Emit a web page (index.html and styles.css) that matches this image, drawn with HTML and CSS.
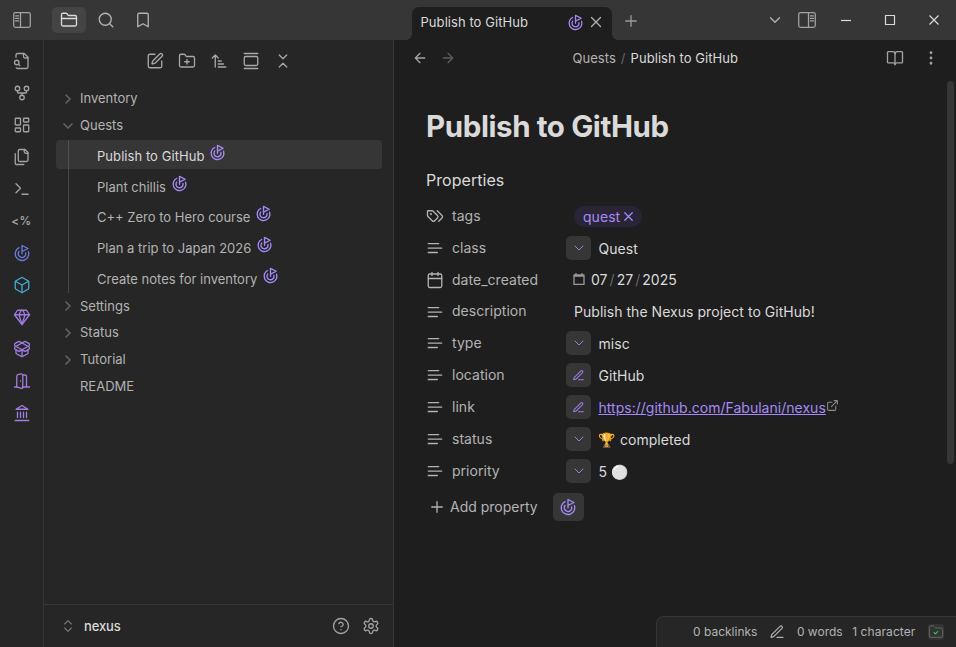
FILE: index.html
```html
<!DOCTYPE html>
<html lang="en">
<head>
<meta charset="utf-8">
<title>Publish to GitHub</title>
<link rel="stylesheet" href="styles.css">
</head>
<body>
<svg class="sprite" aria-hidden="true">
  <symbol id="goal" viewBox="0 0 24 24"><path d="M12 13V2l8 4-8 4"/><path d="M20.561 10.222a9 9 0 1 1-12.55-5.29"/><path d="M8.002 9.997a5 5 0 1 0 8.9 2.02"/></symbol>
  <symbol id="folder" viewBox="0 0 24 24"><path d="M20 20a2 2 0 0 0 2-2V8a2 2 0 0 0-2-2h-7.9a2 2 0 0 1-1.69-.9L9.6 3.9A2 2 0 0 0 7.93 3H4a2 2 0 0 0-2 2v13a2 2 0 0 0 2 2Z"/><path d="M2 10h20"/></symbol>
  <symbol id="folder-plus" viewBox="0 0 24 24"><path d="M12 10v6M9 13h6M20 20a2 2 0 0 0 2-2V8a2 2 0 0 0-2-2h-7.9a2 2 0 0 1-1.69-.9L9.6 3.9A2 2 0 0 0 7.93 3H4a2 2 0 0 0-2 2v13a2 2 0 0 0 2 2Z"/></symbol>
  <symbol id="folder-check" viewBox="0 0 24 24"><path d="M20 20a2 2 0 0 0 2-2V8a2 2 0 0 0-2-2h-7.9a2 2 0 0 1-1.69-.9L9.6 3.9A2 2 0 0 0 7.93 3H4a2 2 0 0 0-2 2v13a2 2 0 0 0 2 2Z"/><path stroke="#2fbf5b" stroke-width="2" d="m9.300 13 1.800 1.800 3.400-3.400"/></symbol>
  <symbol id="search" viewBox="0 0 24 24"><circle cx="11" cy="11" r="8"/><path d="m21 21-4.3-4.3"/></symbol>
  <symbol id="bookmark" viewBox="0 0 24 24"><path d="m19 21-7-4-7 4V5a2 2 0 0 1 2-2h10a2 2 0 0 1 2 2v16z"/></symbol>
  <symbol id="panel" viewBox="0 0 18 16"><rect x=".7" y=".7" width="16.6" height="14.6" rx="1.8"/><path d="M7.5 .7v14.6M2.6 3.9h3M2.6 6.4h3M2.6 8.9h3"/></symbol>
  <symbol id="file-search" viewBox="0 0 24 24"><path d="M14 2v4a2 2 0 0 0 2 2h4"/><path d="M4.268 21a2 2 0 0 0 1.727 1H18a2 2 0 0 0 2-2V7l-5-5H6a2 2 0 0 0-2 2v3"/><path d="m9 18-1.500-1.500"/><circle cx="5" cy="14" r="3"/></symbol>
  <symbol id="fork" viewBox="0 0 24 24"><circle cx="12" cy="18" r="3"/><circle cx="6" cy="6" r="3"/><circle cx="18" cy="6" r="3"/><path d="M18 9v2c0 .6-.4 1-1 1H7c-.6 0-1-.4-1-1V9M12 12v3"/></symbol>
  <symbol id="dashboard" viewBox="0 0 24 24"><rect x="3" y="3" width="7" height="9" rx="1"/><rect x="14" y="3" width="7" height="5" rx="1"/><rect x="14" y="12" width="7" height="9" rx="1"/><rect x="3" y="16" width="7" height="5" rx="1"/></symbol>
  <symbol id="files" viewBox="0 0 24 24"><path d="M20 7h-3a2 2 0 0 1-2-2V2"/><path d="M9 18a2 2 0 0 1-2-2V4a2 2 0 0 1 2-2h7l4 4v10a2 2 0 0 1-2 2Z"/><path d="M3 7.600v12.800A1.600 1.600 0 0 0 4.600 22h9.800"/></symbol>
  <symbol id="terminal" viewBox="0 0 24 24"><path d="m4 17 6-6-6-6M12 19h8"/></symbol>
  <symbol id="box" viewBox="0 0 24 24"><path d="M21 8a2 2 0 0 0-1-1.730l-7-4a2 2 0 0 0-2 0l-7 4A2 2 0 0 0 3 8v8a2 2 0 0 0 1 1.730l7 4a2 2 0 0 0 2 0l7-4A2 2 0 0 0 21 16Z"/><path d="m3.300 7 8.700 5 8.700-5M12 22V12"/></symbol>
  <symbol id="gem" viewBox="0 0 24 24"><path d="M6 3h12l4 6-10 13L2 9Z"/><path d="M11 3 8 9l4 13 4-13-3-6M2 9h20"/></symbol>
  <symbol id="package" viewBox="0 0 24 24"><path d="M12 22v-9"/><path d="M15.170 2.210a1.670 1.670 0 0 1 1.630 0L21 4.570a1.930 1.930 0 0 1 0 3.360L8.820 14.790a1.655 1.655 0 0 1-1.640 0L3 12.430a1.930 1.930 0 0 1 0-3.360z"/><path d="M20 13v3.870a2.060 2.060 0 0 1-1.110 1.830l-6 3.080a1.930 1.930 0 0 1-1.780 0l-6-3.080A2.060 2.060 0 0 1 4 16.870V13"/><path d="M21 12.430a1.930 1.930 0 0 0 0-3.360L8.830 2.200a1.640 1.640 0 0 0-1.630 0L3 4.570a1.930 1.930 0 0 0 0 3.360l12.180 6.860a1.636 1.636 0 0 0 1.630 0z"/></symbol>
  <symbol id="door" viewBox="0 0 24 24"><path d="M13 4h3a2 2 0 0 1 2 2v14M2 20h3M13 20h9M10 12v.01"/><path d="M13 4.562v16.157a1 1 0 0 1-1.242.97L5 20V5.562a2 2 0 0 1 1.515-1.940l4-1A2 2 0 0 1 13 4.561Z"/></symbol>
  <symbol id="landmark" viewBox="0 0 24 24"><path d="M3 22h18M6 18v-7M10 18v-7M14 18v-7M18 18v-7M12 2l8 5H4z"/></symbol>
  <symbol id="compose" viewBox="0 0 24 24"><path d="M12 3H5a2 2 0 0 0-2 2v14a2 2 0 0 0 2 2h14a2 2 0 0 0 2-2v-7"/><path d="M18.375 2.625a1 1 0 0 1 3 3l-9.013 9.014a2 2 0 0 1-.853.505l-2.873.84a.5.5 0 0 1-.62-.62l.84-2.873a2 2 0 0 1 .506-.852z"/></symbol>
  <symbol id="sort" viewBox="0 0 24 24"><path d="m3 8 4-4 4 4M7 4v16M11 12h4M11 16h7M11 20h10"/></symbol>
  <symbol id="gallery" viewBox="0 0 24 24"><path d="M3 2h18M3 22h18"/><rect x="3" y="6" width="18" height="12" rx="2"/></symbol>
  <symbol id="collapse" viewBox="0 0 24 24"><path d="m7 20 5-5 5 5M7 4l5 5 5-5"/></symbol>
  <symbol id="updown" viewBox="0 0 24 24"><path d="m7 15 5 5 5-5M7 9l5-5 5 5"/></symbol>
  <symbol id="right" viewBox="0 0 24 24"><path d="m9 18 6-6-6-6"/></symbol>
  <symbol id="down" viewBox="0 0 24 24"><path d="m6 9 6 6 6-6"/></symbol>
  <symbol id="x" viewBox="0 0 24 24"><path d="M18 6 6 18M6 6l12 12"/></symbol>
  <symbol id="plus" viewBox="0 0 24 24"><path d="M5 12h14M12 5v14"/></symbol>
  <symbol id="left-arrow" viewBox="0 0 24 24"><path d="m12 19-7-7 7-7M19 12H5"/></symbol>
  <symbol id="right-arrow" viewBox="0 0 24 24"><path d="M5 12h14M12 5l7 7-7 7"/></symbol>
  <symbol id="book" viewBox="0 0 24 24"><path d="M12 6v15"/><path d="M3 18.500a1 1 0 0 1-1-1V4.500a1 1 0 0 1 1-1h6a3 3 0 0 1 3 3 3 3 0 0 1 3-3h6a1 1 0 0 1 1 1v13a1 1 0 0 1-1 1h-7a2 2 0 0 0-2 2 2 2 0 0 0-2-2z"/></symbol>
  <symbol id="dots" viewBox="0 0 24 24"><circle cx="12" cy="12" r="1"/><circle cx="12" cy="5" r="1"/><circle cx="12" cy="19" r="1"/></symbol>
  <symbol id="tags" viewBox="0 0 24 24"><path d="m15 5 6.300 6.300a2.400 2.400 0 0 1 0 3.400L17 19"/><path d="M9.586 5.586A2 2 0 0 0 8.172 5H3a1 1 0 0 0-1 1v5.172a2 2 0 0 0 .586 1.414L8.290 18.290a2.426 2.426 0 0 0 3.420 0l3.580-3.580a2.426 2.426 0 0 0 0-3.420z"/><circle cx="6.500" cy="9.500" r=".5"/></symbol>
  <symbol id="text" viewBox="0 0 24 24"><path d="M17 6.100H3M21 12.100H3M15.100 18H3"/></symbol>
  <symbol id="calendar" viewBox="0 0 24 24"><path d="M8 2v4M16 2v4M3 10h18"/><rect x="3" y="4" width="18" height="18" rx="2"/></symbol>
  <symbol id="picker" viewBox="0 0 12 12"><path d="M1 2h10v9.500H1zM1 3h10M3 .5v2M9 .5v2"/></symbol>
  <symbol id="pen" viewBox="0 0 24 24"><path d="M12 20h9M16.500 3.500a2.120 2.120 0 0 1 3 3L7 19l-4 1 1-4Z"/></symbol>
  <symbol id="external" viewBox="0 0 24 24"><path d="M15 3h6v6M10 14 21 3M18 13v6a2 2 0 0 1-2 2H5a2 2 0 0 1-2-2V8a2 2 0 0 1 2-2h6"/></symbol>
  <symbol id="help" viewBox="0 0 24 24"><circle cx="12" cy="12" r="10"/><path d="M9.090 9a3 3 0 0 1 5.830 1c0 2-3 3-3 3M12 17h.01"/></symbol>
  <symbol id="gear" viewBox="0 0 24 24"><path d="M12.220 2h-.44a2 2 0 0 0-2 2v.18a2 2 0 0 1-1 1.730l-.43.25a2 2 0 0 1-2 0l-.15-.08a2 2 0 0 0-2.730.73l-.22.38a2 2 0 0 0 .73 2.730l.15.1a2 2 0 0 1 1 1.720v.51a2 2 0 0 1-1 1.740l-.15.09a2 2 0 0 0-.73 2.730l.22.38a2 2 0 0 0 2.730.73l.15-.08a2 2 0 0 1 2 0l.43.25a2 2 0 0 1 1 1.730V20a2 2 0 0 0 2 2h.44a2 2 0 0 0 2-2v-.18a2 2 0 0 1 1-1.730l.43-.25a2 2 0 0 1 2 0l.15.08a2 2 0 0 0 2.730-.73l.22-.39a2 2 0 0 0-.73-2.730l-.15-.08a2 2 0 0 1-1-1.740v-.5a2 2 0 0 1 1-1.740l.15-.09a2 2 0 0 0 .73-2.730l-.22-.38a2 2 0 0 0-2.730-.73l-.15.08a2 2 0 0 1-2 0l-.43-.25a2 2 0 0 1-1-1.730V4a2 2 0 0 0-2-2z"/><circle cx="12" cy="12" r="3"/></symbol>
</svg>

<div class="app">
  <header class="titlebar">
    <div class="title-left">
      <svg class="panel"><use href="#panel"/></svg>
      <span class="side-tab active"><svg class="icon"><use href="#folder"/></svg></span>
      <span class="side-tab"><svg class="icon"><use href="#search"/></svg></span>
      <span class="side-tab"><svg class="icon"><use href="#bookmark"/></svg></span>
    </div>
    <div class="tab">
      <span class="tab-name">Publish to GitHub</span>
      <svg class="icon goal"><use href="#goal"/></svg>
      <svg class="icon close"><use href="#x"/></svg>
    </div>
    <svg class="icon new-tab"><use href="#plus"/></svg>
    <div class="window-tools">
      <svg class="icon tab-list"><use href="#down"/></svg>
      <svg class="panel flip"><use href="#panel"/></svg>
      <svg class="win" viewBox="0 0 12 12"><path d="M1 6.500h10"/></svg>
      <svg class="win" viewBox="0 0 12 12"><path d="M1.500 1.500h9v9h-9z"/></svg>
      <svg class="win" viewBox="0 0 12 12"><path d="m1.500 1.500 9 9m0-9-9 9"/></svg>
    </div>
  </header>

  <nav class="ribbon">
    <svg class="icon"><use href="#file-search"/></svg>
    <svg class="icon"><use href="#fork"/></svg>
    <svg class="icon"><use href="#dashboard"/></svg>
    <svg class="icon"><use href="#files"/></svg>
    <svg class="icon"><use href="#terminal"/></svg>
    <span class="template">&lt;%</span>
    <svg class="icon blue"><use href="#goal"/></svg>
    <svg class="icon cyan"><use href="#box"/></svg>
    <svg class="icon violet"><use href="#gem"/></svg>
    <svg class="icon violet"><use href="#package"/></svg>
    <svg class="icon violet"><use href="#door"/></svg>
    <svg class="icon violet"><use href="#landmark"/></svg>
  </nav>

  <aside class="sidebar">
    <div class="nav-actions">
      <svg class="icon"><use href="#compose"/></svg>
      <svg class="icon"><use href="#folder-plus"/></svg>
      <svg class="icon"><use href="#sort"/></svg>
      <svg class="icon"><use href="#gallery"/></svg>
      <svg class="icon"><use href="#collapse"/></svg>
    </div>
    <div class="tree">
      <div class="row"><svg class="chev"><use href="#right"/></svg>Inventory</div>
      <div class="row"><svg class="chev"><use href="#down"/></svg>Quests</div>
      <div class="children">
        <div class="note current"><span>Publish to GitHub</span><svg class="mark"><use href="#goal"/></svg></div>
        <div class="note"><span>Plant chillis</span><svg class="mark"><use href="#goal"/></svg></div>
        <div class="note"><span>C++ Zero to Hero course</span><svg class="mark"><use href="#goal"/></svg></div>
        <div class="note"><span>Plan a trip to Japan 2026</span><svg class="mark"><use href="#goal"/></svg></div>
        <div class="note"><span>Create notes for inventory</span><svg class="mark"><use href="#goal"/></svg></div>
      </div>
      <div class="row"><svg class="chev"><use href="#right"/></svg>Settings</div>
      <div class="row"><svg class="chev"><use href="#right"/></svg>Status</div>
      <div class="row"><svg class="chev"><use href="#right"/></svg>Tutorial</div>
      <div class="row leaf">README</div>
    </div>
    <div class="vault">
      <svg class="switch"><use href="#updown"/></svg>
      <span class="vault-name">nexus</span>
      <svg class="icon"><use href="#help"/></svg>
      <svg class="icon"><use href="#gear"/></svg>
    </div>
  </aside>

  <main class="view">
    <div class="view-header">
      <div class="history"><svg><use href="#left-arrow"/></svg><svg class="off"><use href="#right-arrow"/></svg></div>
      <div class="crumbs"><span>Quests</span><i>/</i><b>Publish to GitHub</b></div>
      <div class="view-actions"><svg class="icon"><use href="#book"/></svg><svg class="icon"><use href="#dots"/></svg></div>
    </div>
    <div class="doc">
      <h1>Publish to GitHub</h1>
      <h2>Properties</h2>
      <div class="props">
        <div class="prop"><svg class="icon"><use href="#tags"/></svg><span class="key">tags</span><div class="val plain"><span class="pill">quest<svg><use href="#x"/></svg></span></div></div>
        <div class="prop"><svg class="icon"><use href="#text"/></svg><span class="key">class</span><div class="val"><span class="btn"><svg><use href="#down"/></svg></span>Quest</div></div>
        <div class="prop"><svg class="icon"><use href="#calendar"/></svg><span class="key">date_created</span><div class="val date"><svg class="picker"><use href="#picker"/></svg>07<i>/</i>27<i>/</i>2025</div></div>
        <div class="prop short"><svg class="icon"><use href="#text"/></svg><span class="key">description</span><div class="val plain">Publish the Nexus project to GitHub!</div></div>
        <div class="prop"><svg class="icon"><use href="#text"/></svg><span class="key">type</span><div class="val"><span class="btn"><svg><use href="#down"/></svg></span>misc</div></div>
        <div class="prop"><svg class="icon"><use href="#text"/></svg><span class="key">location</span><div class="val"><span class="btn pen"><svg><use href="#pen"/></svg></span>GitHub</div></div>
        <div class="prop"><svg class="icon"><use href="#text"/></svg><span class="key">link</span><div class="val"><span class="btn pen"><svg><use href="#pen"/></svg></span><span class="url">https://github.com/Fabulani/nexus</span><svg class="ext"><use href="#external"/></svg></div></div>
        <div class="prop"><svg class="icon"><use href="#text"/></svg><span class="key">status</span><div class="val"><span class="btn"><svg><use href="#down"/></svg></span>🏆 completed</div></div>
        <div class="prop"><svg class="icon"><use href="#text"/></svg><span class="key">priority</span><div class="val"><span class="btn"><svg><use href="#down"/></svg></span>5 ⚪</div></div>
      </div>
      <div class="add">
        <svg class="icon"><use href="#plus"/></svg><span class="add-label">Add property</span>
        <span class="quest-btn"><svg class="icon"><use href="#goal"/></svg></span>
      </div>
    </div>
    <div class="scrollbar"></div>
    <footer class="status">
      <span>0 backlinks</span>
      <svg class="edit"><use href="#pen"/></svg>
      <span class="words">0 words</span>
      <span class="chars">1 character</span>
      <span class="sync"><svg><use href="#folder-check"/></svg></span>
    </footer>
  </main>
</div>
</body>
</html>
```

FILE: styles.css
```css
* { box-sizing: border-box; }
body {
  margin: 0;
  background: #1e1e1e;
  color: #b3b3b3;
  font: 13px/17px Inter, "Liberation Sans", "Noto Color Emoji", sans-serif;
}
.sprite { position: absolute; width: 0; height: 0; }
svg { fill: none; stroke: currentColor; stroke-width: 1.75; stroke-linecap: round; stroke-linejoin: round; flex: none; }
i { font-style: normal; color: #666; }
.icon { width: 18px; height: 18px; }

.app {
  display: grid;
  grid-template: 40px 607px / 44px 350px 562px;
  width: 956px;
  height: 647px;
  overflow: hidden;
}

/* Title bar */
.titlebar { grid-column: 1 / -1; display: flex; background: #363636; color: #b3b3b3; }
.title-left { display: flex; align-items: center; width: 412px; padding-left: 13px; }
.panel { width: 18px; height: 16px; stroke-width: 1.25; color: #a3a3a3; }
.flip { transform: scaleX(-1); }
.side-tab { display: flex; align-items: center; justify-content: center; width: 34px; height: 26px; margin-right: 3px; border-radius: 5px; }
.side-tab.active { margin-left: 21px; background: #444; color: #dadada; }
.tab {
  position: relative;
  display: flex;
  align-items: center;
  width: 200px;
  height: 33px;
  margin-top: 7px;
  padding: 0 7px 3px 8.5px;
  border-radius: 7px 7px 0 0;
  background: #1e1e1e;
  color: #dadada;
}
.tab::before, .tab::after {
  content: "";
  position: absolute;
  bottom: 0;
  width: 6px;
  height: 6px;
}
.tab::before { left: -6px; background: radial-gradient(circle at 0 0, #363636 5.5px, #1e1e1e 6px); }
.tab::after { right: -6px; background: radial-gradient(circle at 100% 0, #363636 5.5px, #1e1e1e 6px); }
.tab-name { flex: 1; letter-spacing: 0.06px; }
.goal { color: #a68af9; width: 17px; height: 17px; }
.close { margin-left: 3px; color: #b3b3b3; }
.new-tab { margin: 12px 0 0 10px; color: #999; }
.window-tools { display: flex; align-items: center; margin-left: auto; padding-right: 16px; }
.tab-list { margin-right: 14px; width: 18px; }
.win { width: 12px; height: 12px; margin-left: 32px; color: #dadada; stroke-width: 1.2; stroke-linecap: butt; }
.panel + .win { margin-left: 24px; }

/* Ribbon */
.ribbon { display: flex; flex-direction: column; align-items: center; gap: 14px; padding-top: 12px; border-right: 1px solid #363636; background: #262626; color: #a3a3a3; }
.template { height: 18px; font-weight: 600; font-size: 11.5px; line-height: 18px; letter-spacing: 0.5px; }
.blue { color: #6c7ae0; }
.cyan { color: #45a9d6; }
.violet { color: #a07be0; }

/* File explorer */
.sidebar { display: flex; flex-direction: column; border-right: 1px solid #363636; background: #262626; }
.nav-actions { display: flex; justify-content: center; gap: 14px; height: 45px; padding-top: 12px; color: #a8a8a8; }
.tree { flex: 1; padding: 0 11px 0 12px; }
.row { display: flex; align-items: center; height: 26.8px; padding-top: 1px; }
.children ~ .row { height: 26.6px; }
.leaf { padding-left: 24px; }
.chev { width: 16px; height: 16px; margin: 0 4px; color: #666; stroke-width: 2.25; }
.children { height: 153px; margin-top: 1px; background: linear-gradient(#464646, #464646) 12px 0 / 1px 100% no-repeat; }
.note { display: flex; align-items: center; height: 29px; margin-bottom: 1.7px; padding-left: 41px; padding-top: 5px; border-radius: 4px; }
.note.current { background: linear-gradient(#505050, #505050) 12px 0 / 1px 100% no-repeat #363636; color: #dadada; }
.note.current span { letter-spacing: 0.06px; }
.mark { width: 17px; height: 17px; margin: -8px 0 0 5px; color: #a68af9; stroke-width: 1.9; }
.vault { display: flex; align-items: center; height: 43px; padding: 0 13px 0 16px; border-top: 1px solid #363636; color: #a3a3a3; }
.switch { width: 16px; height: 16px; color: #777; }
.vault-name { flex: 1; margin-left: 8px; color: #dadada; font-weight: 500; letter-spacing: -0.15px; }
.vault .icon + .icon { margin-left: 12px; }

/* Note view */
.view { position: relative; background: #1e1e1e; }
.view-header { display: flex; align-items: center; height: 36px; padding: 0 16px 0 18px; }
.history { display: flex; gap: 12px; width: 160.5px; }
.history svg { width: 16px; height: 16px; color: #a3a3a3; stroke-width: 2; }
.history .off { color: #5c5c5c; }
.crumbs { flex: 1; letter-spacing: 0.05px; }
.crumbs i { margin: 0 5px; }
.crumbs b { color: #dadada; font-weight: 400; }
.view-actions { display: flex; justify-content: flex-end; gap: 18px; color: #a3a3a3; }
.doc { padding: 0 32px; }
h1 { margin: 30px 0 0; font-size: 29.5px; line-height: 40px; font-weight: 700; letter-spacing: -0.4px; color: #dadada; }
h2 { margin: 22px 0 8px; font-size: 16px; line-height: 24px; font-weight: 400; letter-spacing: 0.04px; color: #dadada; }
.prop { display: flex; align-items: center; height: 32px; font-size: 14px; }
.prop.short { height: 31px; }
.key { width: 114px; margin-left: 8px; padding-bottom: 2px; letter-spacing: 0.03px; }
.val { display: flex; align-items: center; height: 24px; color: #dadada; white-space: pre; letter-spacing: 0.04px; }
.plain { padding-left: 8px; }
.btn { display: flex; align-items: center; justify-content: center; width: 25px; height: 24px; margin-right: 7.5px; border-radius: 5px; background: #363636; color: #9a80e6; }
.btn svg { width: 16px; height: 16px; stroke-width: 1.5; }
.btn.pen svg { width: 13px; height: 13px; stroke-width: 1.9; }
.pill { display: flex; align-items: center; height: 21px; padding: 0 6px 0 9px; border-radius: 11px; background: #2a2536; color: #a68af9; }
.pill svg { width: 15px; height: 15px; margin-left: 1px; stroke-width: 2; }
.date { padding: 0 0 2px 7px; }
.date i { margin: 0 2px; }
.picker { width: 12px; height: 12px; margin-right: 6px; color: #999; stroke-width: 1.3; }
.url { color: #a68af9; text-decoration: underline; letter-spacing: 0.02px; }
.ext { width: 13px; height: 13px; margin-top: -4px; color: #8a8a8a; stroke-width: 2; }
.add { display: flex; align-items: center; height: 28px; margin-top: 6px; padding-left: 2px; font-size: 14px; }
.add-label { margin-left: 4px; padding-bottom: 2px; }
.quest-btn { display: flex; align-items: center; justify-content: center; width: 31px; height: 28px; margin-left: 15px; border-radius: 5px; background: #363636; color: #a68af9; }
.scrollbar { position: absolute; right: 2px; top: 41px; width: 7px; height: 383px; border-radius: 4px; background: #363636; }
.status {
  position: absolute;
  right: 0;
  bottom: 0;
  display: flex;
  align-items: center;
  width: 300px;
  height: 31px;
  padding: 0 12px 1px 36px;
  border: solid #363636;
  border-width: 1px 0 0 1px;
  border-radius: 8px 0 0 0;
  background: #262626;
  font-size: 12px;
}
.edit { width: 16px; height: 16px; margin: 0 12px 0 11.5px; }
.chars { margin-left: 9.5px; letter-spacing: 0.08px; }
.sync { display: flex; align-items: center; justify-content: center; margin-left: auto; width: 16px; height: 16px; border-radius: 3px; background: #333; }
.sync svg { width: 16px; height: 16px; color: #666; stroke-width: 1.5; }
```
